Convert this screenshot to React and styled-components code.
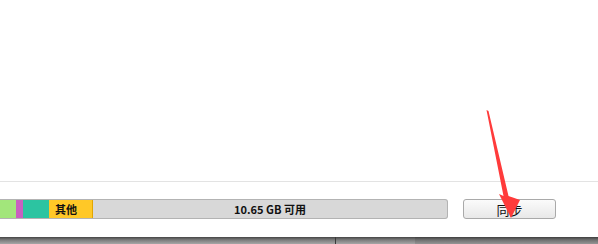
import React from "react";
import styled, { createGlobalStyle } from "styled-components";

const Global = createGlobalStyle`
  html, body { margin: 0; padding: 0; background: #fff; }
  body { width: 598px; height: 244px; overflow: hidden; font-family: "Liberation Sans", "Noto Sans CJK SC", sans-serif; }
`;

const Page = styled.div`
  position: relative;
  width: 598px;
  height: 244px;
  display: flex;
  flex-direction: column;
  background: #fff;
  overflow: hidden;
`;

const Content = styled.div`
  flex: none;
  height: 182px;
  border-bottom: 1px solid #e3e3e3;
  box-sizing: border-box;
`;

const Footer = styled.div`
  flex: 1;
  display: flex;
  align-items: flex-start;
  gap: 15px;
  padding: 17px 42px 0 0;
`;

const Bar = styled.div`
  flex: 1;
  height: 20px;
  box-sizing: border-box;
  display: flex;
  border: 1px solid #b3b3b3;
  border-left: none;
  border-radius: 0 3px 3px 0;
  background: #d8d8d8;
  overflow: hidden;
`;

const Segment = styled.div`
  flex: none;
  width: ${(p) => p.$w}px;
  background: ${(p) => p.$c};
  border-right: ${(p) => (p.$edge ? `1px solid ${p.$edge}` : "none")};
  box-sizing: border-box;
  display: flex;
  align-items: center;
  padding-left: ${(p) => (p.$label ? "6px" : "0")};
  font: bold 11px "Noto Sans CJK SC", sans-serif;
  color: #111;
`;

const Free = styled.div`
  flex: 1;
  display: flex;
  align-items: center;
  justify-content: center;
  font: bold 11px "Noto Sans CJK SC", "DejaVu Sans", sans-serif;
  color: #111;
`;

const Button = styled.button`
  flex: none;
  width: 93px;
  height: 20px;
  box-sizing: border-box;
  border: 1px solid #a9a9a9;
  border-radius: 3px;
  background: linear-gradient(#fbfbfb, #e8e8e8);
  font: 13px "Noto Sans CJK SC", sans-serif;
  color: #111;
  padding: 0;
  display: flex;
  align-items: center;
  justify-content: center;
  line-height: 1;
`;

const Taskbar = styled.div`
  flex: none;
  height: 7px;
  display: flex;
  background: linear-gradient(#454545, #7a7a7a 40%, #a6a6a6);
`;

const TaskSection = styled.div`
  flex: ${(p) => (p.$w ? "none" : "1")};
  width: ${(p) => (p.$w ? `${p.$w}px` : "auto")};
  border-right: ${(p) => (p.$sep ? "1px solid #3a3a3a" : "none")};
  background: ${(p) => (p.$dim ? "linear-gradient(#3f3f3f, #6e6e6e 40%, #959595)" : "transparent")};
`;

const Arrow = styled.svg`
  position: absolute;
  left: 0;
  top: 0;
  pointer-events: none;
`;

export default function App() {
  return (
    <>
      <Global />
      <Page>
        <Content />
        <Footer>
          <Bar>
            <Segment $w={16} $c="#a2e67b" />
            <Segment $w={7} $c="#c960c0" />
            <Segment $w={26} $c="#2cc4a1" />
            <Segment $w={44} $c="#ffc827" $edge="#e2a600" $label>其他</Segment>
            <Free>10.65 GB 可用</Free>
          </Bar>
          <Button>同步</Button>
        </Footer>
        <Taskbar>
          <TaskSection $w={335} $sep />
          <TaskSection $w={79} />
          <TaskSection $dim />
        </Taskbar>
        <Arrow width="598" height="244" viewBox="0 0 598 244">
          <polygon
            points="486.5,110 488.5,111 508.5,196 520,200 511,218 499,194 503.5,196"
            fill="#ff3b3b"
          />
        </Arrow>
      </Page>
    </>
  );
}
